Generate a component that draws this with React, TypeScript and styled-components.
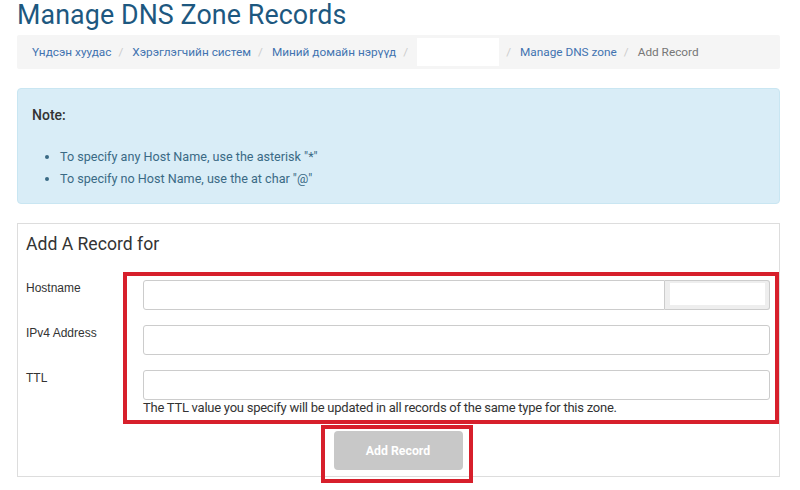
import React from "react";
import styled, { createGlobalStyle } from "styled-components";

const Global = createGlobalStyle`
  html, body { margin: 0; padding: 0; background: #fff; }
  body { font-family: Roboto, "Liberation Sans", Arial, sans-serif; color: #333; }
  * { box-sizing: border-box; }
`;

const Page = styled.div`
  position: relative;
  width: 800px;
  height: 490px;
  overflow: hidden;
  padding: 0 20px 0 17px;
`;

const Title = styled.h1`
  margin: 0;
  font-family: Roboto, sans-serif;
  font-weight: 400;
  font-size: 26.8px;
  line-height: 30px;
  color: #1d5880;
  letter-spacing: 0.1px;
`;

const Crumbs = styled.ol`
  list-style: none;
  margin: 5px 0 0;
  padding: 0 15px;
  height: 34px;
  background: #f5f5f5;
  border-radius: 2px;
  display: flex;
  align-items: center;
  font-size: 11.8px;
`;

const Crumb = styled.li<{ $active?: boolean }>`
  display: flex;
  align-items: center;
  color: ${(p) => (p.$active ? "#777" : "#4273b0")};
  &:not(:first-child)::before {
    content: "/";
    color: #ccc;
    padding: 0 9px 0 7px;
  }
`;

const Blank = styled.span`
  display: inline-block;
  width: 82px;
  height: 28px;
  background: #fff;
`;

const Alert = styled.div`
  margin-top: 19px;
  background: #d9edf7;
  border: 1px solid #c9e6f2;
  border-radius: 4px;
  padding: 16px 14px 13px;
  color: #31708f;
`;

const NoteTitle = styled.div`
  font-size: 14px;
  font-weight: 500;
  line-height: 20px;
  color: #333;
`;

const NoteList = styled.ul`
  margin: 21px 0 0;
  padding-left: 28px;
  font-size: 12.6px;
  line-height: 22px;
  color: #3a6a85;
`;

const Panel = styled.div`
  margin-top: 19px;
  border: 1px solid #ddd;
  padding: 8px 9px 6px 8px;
`;

const PanelTitle = styled.h3`
  margin: 0;
  font-family: Roboto, sans-serif;
  font-weight: 400;
  font-size: 17.6px;
  line-height: 24px;
  color: #333;
`;

const Form = styled.div`
  margin-top: 24px;
  display: flex;
  flex-direction: column;
  gap: 15px;
`;

const Row = styled.div`
  display: grid;
  grid-template-columns: 117px 1fr;
`;

const Label = styled.label`
  font-family: "Liberation Sans", Arial, sans-serif;
  font-size: 12px;
  line-height: 16px;
  color: #333;
`;

const Field = styled.div`
  display: flex;
  flex-direction: column;
`;

const Group = styled.div`
  display: flex;
  height: 30px;
`;

const Input = styled.input<{ $joined?: boolean }>`
  flex: 1;
  height: 30px;
  border: 1px solid #ccc;
  border-radius: ${(p) => (p.$joined ? "3px 0 0 3px" : "3px")};
  background: #fff;
  outline: none;
  font: inherit;
`;

const Addon = styled.span`
  width: 105px;
  border: 1px solid #ccc;
  border-left: none;
  border-radius: 0 3px 3px 0;
  background: #eee;
  padding: 2px 4px 4px 5px;
  display: flex;
`;

const AddonFill = styled.span`
  flex: 1;
  background: #fff;
`;

const Help = styled.div`
  font-family: Roboto, sans-serif;
  font-size: 13px;
  line-height: 14px;
  color: #333;
  letter-spacing: -0.25px;
  margin-top: 1px;
`;

const Actions = styled.div`
  display: flex;
  justify-content: center;
  margin-top: 16px;
`;

const Button = styled.button`
  width: 129px;
  height: 39px;
  border: none;
  border-radius: 4px;
  background: #c8c8c8;
  color: #fff;
  font-family: Roboto, sans-serif;
  font-weight: 700;
  font-size: 12.3px;
  cursor: not-allowed;
`;

const Mark = styled.div<{ $x: number; $y: number; $w: number; $h: number }>`
  position: absolute;
  left: ${(p) => p.$x}px;
  top: ${(p) => p.$y}px;
  width: ${(p) => p.$w}px;
  height: ${(p) => p.$h}px;
  border: 4px solid #d71f2b;
  pointer-events: none;
`;

export default function App() {
  return (
    <>
      <Global />
      <Page>
        <Title>Manage DNS Zone Records</Title>
        <Crumbs>
          <Crumb>Үндсэн хуудас</Crumb>
          <Crumb>Хэрэглэгчийн систем</Crumb>
          <Crumb>Миний домайн нэрүүд</Crumb>
          <Crumb>
            <Blank />
          </Crumb>
          <Crumb>Manage DNS zone</Crumb>
          <Crumb $active>Add Record</Crumb>
        </Crumbs>
        <Alert>
          <NoteTitle>Note:</NoteTitle>
          <NoteList>
            <li>To specify any Host Name, use the asterisk "*"</li>
            <li>To specify no Host Name, use the at char "@"</li>
          </NoteList>
        </Alert>
        <Panel>
          <PanelTitle>Add A Record for</PanelTitle>
          <Form>
            <Row>
              <Label>Hostname</Label>
              <Group>
                <Input $joined />
                <Addon>
                  <AddonFill />
                </Addon>
              </Group>
            </Row>
            <Row>
              <Label>IPv4 Address</Label>
              <Group>
                <Input />
              </Group>
            </Row>
            <Row>
              <Label>TTL</Label>
              <Field>
                <Group>
                  <Input />
                </Group>
                <Help>
                  The TTL value you specify will be updated in all records of the same type for this zone.
                </Help>
              </Field>
            </Row>
          </Form>
          <Actions>
            <Button disabled>Add Record</Button>
          </Actions>
        </Panel>
        <Mark $x={123} $y={272} $w={656} $h={152} />
        <Mark $x={321} $y={425} $w={152} $h={58} />
      </Page>
    </>
  );
}
